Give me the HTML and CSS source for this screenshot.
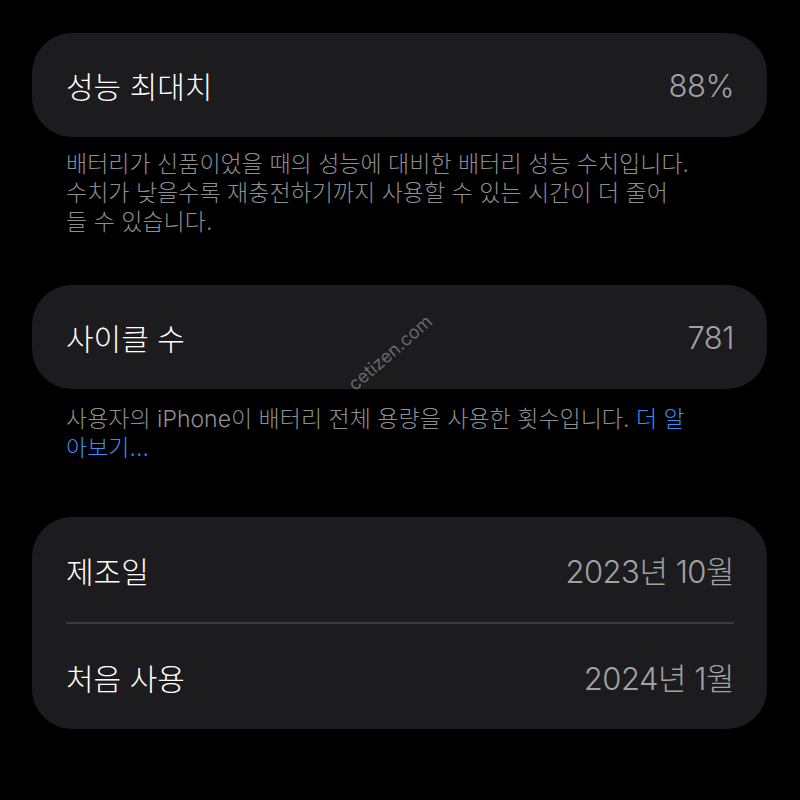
FILE: index.html
```html
<!DOCTYPE html>
<html lang="ko">
<head>
  <meta charset="UTF-8" />
  <title>배터리 상태</title>
  <meta name="viewport" content="width=device-width, initial-scale=1.0">
  <link rel="stylesheet" href="styles.css">
</head>
<body>
  <div class="screen">
    <section class="section">
      <div class="card">
        <span class="label">성능 최대치</span>
        <span class="value">88%</span>
      </div>
      <p class="note">배터리가 신품이었을 때의 성능에 대비한 배터리 성능 수치입니다.<br>수치가 낮을수록 재충전하기까지 사용할 수 있는 시간이 더 줄어<br>들 수 있습니다.</p>
    </section>

    <section class="section">
      <div class="card">
        <span class="label">사이클 수</span>
        <span class="value">781</span>
        <span class="watermark">cetizen.com</span>
      </div>
      <p class="note note-cycle">사용자의 iPhone이 배터리 전체 용량을 사용한 횟수입니다. <a href="#">더 알<br>아보기...</a></p>
    </section>

    <section class="section section-dates">
      <div class="card card-list">
        <div class="row">
          <span class="label">제조일</span>
          <span class="value">2023년 10월</span>
        </div>
        <div class="divider"></div>
        <div class="row">
          <span class="label">처음 사용</span>
          <span class="value">2024년 1월</span>
        </div>
      </div>
    </section>
  </div>
</body>
</html>
```

FILE: styles.css
```css
body {
  margin: 0;
  background-color: #000;
  font-family: Inter, "Noto Sans CJK KR", sans-serif;
  color: #fff;
}
.screen {
  width: 800px;
  height: 800px;
  padding: 33px 33px 0 32px;
  box-sizing: border-box;
  overflow: hidden;
}
.section + .section {
  margin-top: 48px;
}
.section-dates {
  margin-top: 54px !important;
}
.card {
  position: relative;
  height: 104px;
  padding: 0 33px 0 34px;
  background-color: #1c1c1e;
  border-radius: 40px;
  display: flex;
  align-items: center;
  justify-content: space-between;
}
.label {
  font-size: 30px;
  font-weight: 300;
  color: #fff;
}
.value {
  font-size: 31px;
  font-weight: 300;
  letter-spacing: -0.5px;
  color: #a1a1a6;
}
.note {
  margin: 13px 0 0 34px;
  font-size: 23px;
  line-height: 29px;
  font-weight: 300;
  color: #8e8e93;
  white-space: nowrap;
}
.note-cycle {
  margin-top: 16px;
}
.note a {
  color: #3a8ef6;
  text-decoration: none;
}
.card-list {
  height: auto;
  padding: 0;
  display: block;
}
.row {
  height: 105px;
  padding: 0 33px 0 34px;
  display: flex;
  align-items: center;
  justify-content: space-between;
}
.divider {
  height: 2px;
  margin: 0 33px 0 34px;
  background-color: #3a3a3c;
}
.watermark {
  position: absolute;
  left: 306px;
  top: 57px;
  font-size: 18px;
  color: rgba(200, 200, 200, 0.45);
  transform: rotate(-41deg);
  pointer-events: none;
}
```
